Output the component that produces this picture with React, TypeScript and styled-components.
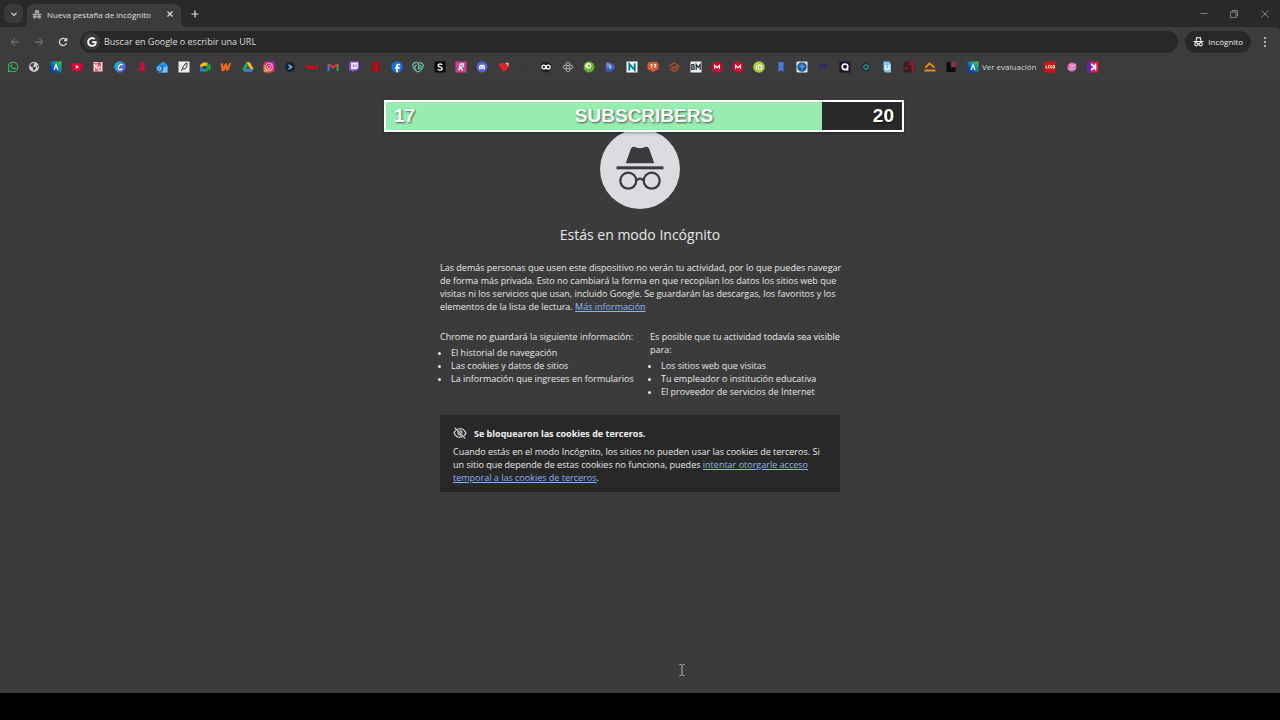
import React from "react";
import styled, { createGlobalStyle } from "styled-components";
import {
  FaWhatsapp,
  FaEarthAmericas,
  FaInstagram,
  FaFacebookF,
  FaDiscord,
  FaGoogle,
} from "react-icons/fa6";

const GlobalStyle = createGlobalStyle`
  *, *::before, *::after { box-sizing: border-box; }
  body {
    margin: 0;
    background: #000;
    color: #e8e8e8;
    font-family: "Open Sans", "Noto Sans", sans-serif;
    font-size: 9px;
    line-height: 13px;
  }
  button, input { font: inherit; color: inherit; }
  svg { display: block; }
`;

const Page = styled.div`
  position: relative;
  min-height: 100vh;
  display: flex;
  flex-direction: column;
`;

/* ---------- window chrome ---------- */

const TabStrip = styled.header`
  display: flex;
  align-items: flex-end;
  height: 27px;
  padding-left: 4px;
  background: #292929;
`;

const IconButton = styled.button<{ $width?: number; $height?: number; $bg?: string; $tone?: string }>`
  flex: none;
  display: flex;
  align-items: center;
  justify-content: center;
  width: ${(p) => p.$width ?? 24}px;
  height: ${(p) => p.$height ?? 24}px;
  padding: 0;
  border: 0;
  border-radius: 6px;
  background: ${(p) => p.$bg ?? "transparent"};
  color: ${(p) => p.$tone ?? "#dcdcdc"};
`;

const SearchTabs = styled.div`
  align-self: center;
  margin-right: 4px;
`;

const Tab = styled.div`
  position: relative;
  display: flex;
  align-items: center;
  width: 154px;
  height: 23px;
  padding: 0 4px 3px 5px;
  border-radius: 7px 7px 0 0;
  background: #3c3c3c;
  color: #e0e0e0;
  font-size: 8px;

  &::before,
  &::after {
    content: "";
    position: absolute;
    bottom: 0;
    width: 6px;
    height: 6px;
  }
  &::before {
    left: -6px;
    background: radial-gradient(circle at 0 0, transparent 6px, #3c3c3c 6px);
  }
  &::after {
    right: -6px;
    background: radial-gradient(circle at 100% 0, transparent 6px, #3c3c3c 6px);
  }
`;

const TabTitle = styled.span`
  flex: 1;
  padding-left: 5px;
  white-space: nowrap;
`;

const NewTab = styled.div`
  align-self: center;
  margin-left: 4px;
`;

const WindowControls = styled.div`
  display: flex;
  margin-left: auto;
  align-self: center;
`;

const Toolbar = styled.div`
  display: flex;
  align-items: center;
  height: 30px;
  padding: 0 4px 1px 3px;
  border-top-right-radius: 6px;
  background: #3c3c3c;
`;

const ToolbarBack = styled.div`
  background: #292929;
`;

const Omnibox = styled.label`
  flex: 1;
  display: flex;
  align-items: center;
  height: 22px;
  margin-left: 5px;
  padding-left: 3px;
  border-radius: 11px;
  background: #282828;
`;

const GoogleBadge = styled.span`
  flex: none;
  display: flex;
  align-items: center;
  justify-content: center;
  width: 17px;
  height: 17px;
  border-radius: 50%;
  background: #3b3b3b;
  color: #fff;
`;

const OmniboxInput = styled.input`
  flex: 1;
  min-width: 0;
  height: 20px;
  padding: 0 0 0 4px;
  border: 0;
  outline: 0;
  background: transparent;

  &::placeholder {
    color: #dedede;
    opacity: 1;
  }
`;

const IncognitoChip = styled.button`
  flex: none;
  display: flex;
  align-items: center;
  gap: 4px;
  height: 22px;
  margin: 0 3px 0 7px;
  padding: 0 8px;
  border: 0;
  border-radius: 11px;
  background: #282828;
  color: #ececec;
  font-size: 8px;
`;

const BookmarksBar = styled.nav`
  display: flex;
  align-items: center;
  height: 24px;
  padding: 0 7px 5px;
  background: #3c3c3c;
`;

const BookmarkList = styled.div<{ $width: number }>`
  flex: none;
  display: flex;
  align-items: center;
  justify-content: space-between;
  width: ${(p) => p.$width}px;
`;

const Bookmark = styled.a`
  display: flex;
  align-items: center;
  gap: 3px;
  color: #d5d5d5;
  font-size: 8px;
  line-height: 12px;
  text-decoration: none;
  white-space: nowrap;
`;

const BookmarkSlot = styled.span`
  display: flex;
  align-items: center;
  justify-content: center;
  width: 12px;
  height: 12px;
`;

const NamedBookmark = styled(Bookmark)`
  margin: 0 8px 0 9px;
`;

/* ---------- page content ---------- */

const Content = styled.main`
  flex: 1;
  display: flex;
  flex-direction: column;
  align-items: center;
  padding: 48px 16px 40px;
  background: #3b3b3b;
`;

const Title = styled.h1`
  margin: 14px 0 0;
  font-size: 14px;
  line-height: 24px;
  font-weight: 400;
`;

const Article = styled.div`
  width: 100%;
  max-width: 400px;
`;

const Paragraph = styled.p`
  margin: 0;
  white-space: nowrap;
`;

const Intro = styled(Paragraph)`
  margin-top: 14px;
`;

const Link = styled.a`
  color: #8ab4f8;
`;

const Strong = styled.strong`
  font-weight: 500;
  color: #f4f4f4;
`;

const Columns = styled.div`
  display: grid;
  grid-template-columns: minmax(0, 1fr) minmax(0, 1fr);
  column-gap: 20px;
  margin-top: 17px;
`;

const BulletList = styled.ul`
  margin: 3px 0 0;
  padding-left: 11px;
  white-space: nowrap;
`;

const CookieCard = styled.section`
  margin-top: 17px;
  padding: 11px 13px 8px;
  background: #282828;
`;

const CookieTitle = styled.h2`
  display: flex;
  align-items: center;
  gap: 7px;
  margin: 0 0 5px;
  font-size: 9px;
  line-height: 13px;
  font-weight: 700;
  color: #f4f4f4;
`;

const Letterbox = styled.footer`
  height: 27px;
  background: #000;
`;

/* ---------- overlays ---------- */

const Goal = styled.div`
  position: absolute;
  top: 100px;
  left: 30%;
  width: 520px;
  height: 32px;
  border: 2px solid #fff;
  background: #292929;
  box-shadow: 0 1px 3px rgba(0, 0, 0, 0.35);
`;

const GoalFill = styled.div`
  width: 84.5%;
  height: 100%;
  background: #96edaf;
`;

const GoalLabels = styled.div`
  position: absolute;
  inset: 0;
  display: grid;
  grid-template-columns: 1fr auto 1fr;
  align-items: center;
  padding: 0 8px;
  font-family: "Liberation Sans", Arial, sans-serif;
  font-size: 19px;
  line-height: 28px;
  font-weight: 700;
  color: #fff;
  text-shadow: 1px 1px 2px rgba(0, 0, 0, 0.6);

  & > :last-child {
    text-align: right;
  }
`;

const Pointer = styled.div`
  position: absolute;
  left: 678px;
  top: 664px;
`;

/* ---------- drawings ---------- */

const HAT = "M25.7 34.3 31 19.6Q31.9 17.6 34 17.8Q37 19.2 40 19.2Q43 19.2 46 17.8Q48.1 17.6 49 19.6L54.3 34.3Z";

const IncognitoLogo = () => (
  <svg width="80" height="80" viewBox="0 0 80 80" aria-hidden="true">
    <circle cx="40" cy="40" r="40" fill="#dadce0" />
    <g fill="#3b3b3d">
      <path d={HAT} />
      <rect x="16.5" y="37.3" width="47" height="3" />
    </g>
    <g fill="none" stroke="#3b3b3d" strokeWidth="2.3">
      <circle cx="28.3" cy="51.7" r="8" />
      <circle cx="51.7" cy="51.7" r="8" />
      <path d="M36.2 51.2Q40 48.4 43.8 51.2" />
    </g>
  </svg>
);

const SmallIncognito = () => (
  <svg width="10" height="10" viewBox="0 0 20 20" fill="#a6a8ab" aria-hidden="true">
    <path d="M5 8.500 6.800 1.500Q10 3 13.200 1.500L15 8.500ZM1 9.500H19V12H1Z" />
    <circle cx="5.500" cy="15.500" r="3.700" />
    <circle cx="14.500" cy="15.500" r="3.700" />
    <path d="M8 13.500H12V15.500H8Z" />
  </svg>
);

const OutlineIncognito = () => (
  <svg width="11" height="11" viewBox="0 0 22 22" fill="none" stroke="#ececec" strokeWidth="2.200" aria-hidden="true">
    <path d="M6 9.500 7.600 3Q11 4.300 14.400 3L16 9.500M1 11H21" />
    <circle cx="6.500" cy="16.500" r="3.200" />
    <circle cx="15.500" cy="16.500" r="3.200" />
    <path d="M9.500 16H12.500" />
  </svg>
);

const Line = ({ d, width = 1.2 }: { d: string; width?: number }) => (
  <svg width="10" height="10" viewBox="0 0 10 10" fill="none" stroke="currentColor" strokeWidth={width} aria-hidden="true">
    <path d={d} />
  </svg>
);

const EyeOff = () => (
  <svg width="14" height="14" viewBox="0 0 14 14" fill="none" stroke="#e8e8e8" strokeWidth="1.100" aria-hidden="true">
    <path d="M4.600 3.300Q5.700 2.800 7 2.800Q11 2.800 13 7Q12.300 8.500 11 9.600M9.300 10.700Q8.200 11.200 7 11.200Q3 11.200 1 7Q1.700 5.500 3 4.400M1.800 1.800 12.200 12.400" />
    <path d="M6.500 4.800Q8.900 4.800 9.200 7.300M7.800 9.100Q5 9.300 4.800 6.200" />
  </svg>
);

const Fav = ({ children }: { children: React.ReactNode }) => (
  <svg width="12" height="12" viewBox="0 0 12 12" aria-hidden="true">
    {children}
  </svg>
);

const AlphaTile = () => (
  <Fav>
    <defs>
      <linearGradient id="alpha-tile" x1="0" y1="1" x2="1" y2="0">
        <stop offset="0.2" stopColor="#0b3fb0" />
        <stop offset="0.6" stopColor="#0a8fa8" />
        <stop offset="1" stopColor="#4fd02c" />
      </linearGradient>
    </defs>
    <rect x="0.5" y="0.5" width="11" height="11" fill="url(#alpha-tile)" />
    <path d="M4 9 6 3.800 8 9" fill="none" stroke="#fff" strokeWidth="1.3" />
  </Fav>
);

const Mega = () => (
  <Fav>
    <circle cx="6" cy="6" r="5.6" fill="#d9042b" />
    <path d="M3.600 8V4.300L6 6.600 8.400 4.300V8" fill="none" stroke="#fff" strokeWidth="1.2" />
  </Fav>
);

const bookmarks: [string, React.ReactNode][] = [
  ["WhatsApp", <FaWhatsapp size={12} color="#36c96b" />],
  ["Web", <FaEarthAmericas size={10} color="#d0d0d0" />],
  ["Alpha", <AlphaTile />],
  ["YouTube", <Fav><rect x=".5" y="2" width="11" height="8" rx="2.5" fill="#e0002c" /><path d="M4.800 4V8L8.200 6Z" fill="#fff" /></Fav>],
  ["Nd", <Fav><path d="M1 1H11V11H1Z" fill="#c9656c" /><path d="M2.500 10V3L5 8V3M9.500 1V9.500H6.800V6H9.500M2 1.500H6" stroke="#ffd9da" strokeWidth="1.2" fill="none" /></Fav>],
  ["Canva", <Fav><defs><linearGradient id="canva" x1="0" y1="0" x2="1" y2="1"><stop offset="0.1" stopColor="#12c3d0" /><stop offset="1" stopColor="#7a2fe8" /></linearGradient></defs><circle cx="6" cy="6" r="5.8" fill="url(#canva)" /><path d="M8.500 4Q7 2.500 5.200 4.500Q3.500 7 4.800 8.500Q6.500 9.500 8.400 7.500" fill="none" stroke="#fff" strokeWidth="1.2" /></Fav>],
  ["Rojo", <Fav><path d="M2 10 4.500 8 6 1.500 9.500 1V10.800L7 9.500Z" fill="#d00c3d" /></Fav>],
  ["Outlook", <Fav><path d="M1 5 7.500 .5 11.500 4V11.500H2Z" fill="#2f8ee6" /><path d="M5 8 11.500 5V11.500H5Z" fill="#76c4fa" /><rect y="4.500" width="7" height="6" rx="1" fill="#1668c2" /><circle cx="3.5" cy="7.5" r="1.6" fill="none" stroke="#fff" /></Fav>],
  ["Pluma", <Fav><rect x=".5" y=".5" width="11" height="11" fill="#f1eeee" /><path d="M3.500 10 5 6Q7 2 9 2Q9.500 5 7.500 7.500L5 8" fill="none" stroke="#333" /></Fav>],
  ["Meet", <Fav><path d="M1 4 4 1.500H8.500V5H4V7H1Z" fill="#f3bd17" /><path d="M1 5.500H4V8H6V10.500H1Z" fill="#2c78df" /><path d="M8.500 4.500 11.500 2V10L8.500 8V10.500H5V8H7.500V4Z" fill="#1aa64b" /></Fav>],
  ["W", <Fav><path d="M.5 2.500 3 2.300 3.400 6.300 5 2.500 7 2.200 7.400 6 9 2.300 11.500 1.500 8.500 9.500 6.300 9.800 5.800 7 4.300 10 1.800 10.200Z" fill="#f0691d" /></Fav>],
  ["Drive", <Fav><path d="M4.200 1.200H7.800L11.800 8H8.300Z" fill="#f9bd18" /><path d="M4.200 1.200 6 4.200 2.200 10.800.3 8Z" fill="#28a65a" /><path d="M4 7.700H11.800L10 10.800H2.200Z" fill="#3c7fe8" /></Fav>],
  ["Instagram", <Fav><defs><linearGradient id="insta" x1="0" y1="1" x2="1" y2="0"><stop stopColor="#fdb11f" /><stop offset="0.5" stopColor="#f0205f" /><stop offset="1" stopColor="#a42fe0" /></linearGradient></defs><rect x=".5" y=".5" width="11" height="11" rx="2.5" fill="url(#insta)" /><FaInstagram x={2} y={2} size={8} color="#fff" /></Fav>],
  ["Código", <Fav><circle cx="6" cy="6" r="5" fill="#14253a" /><path d="M4.500 3.800 7.500 6 4.500 8.300" fill="none" stroke="#8ec9f2" strokeWidth="1.4" /></Fav>],
  ["Mu", <Fav><path d="M.8 8V4.700H3V7.500M3 5H5V8M7 4.500V7.500H11.200V5H9" fill="none" stroke="#c4121c" strokeWidth="1.8" /></Fav>],
  ["Gmail", <Fav><path d="M1.500 10V3" stroke="#3d82f0" strokeWidth="2" /><path d="M10.500 10V3" stroke="#2ea350" strokeWidth="2" /><path d="M1.500 3 6 6.500 10.500 3" fill="none" stroke="#e53b31" strokeWidth="2" /></Fav>],
  ["Twitch", <Fav><path d="M2 .5H11V7.500L8 10H6L4 11.800V10H1V2.500Z" fill="#8a45ee" /><path d="M3 1.600H10V7L8.500 8.300H3Z" fill="#efe6ff" /><path d="M5.500 3.500V6M8 3.500V6" stroke="#8a45ee" /></Fav>],
  ["Netflix", <Fav><path d="M2.500 .8H9.500V11.200H2.500Z" fill="#a50d18" /><path d="M4.500 .8H5.500L8 11.200H6.800Z" fill="#d0101d" /></Fav>],
  ["Facebook", <Fav><circle cx="6" cy="6" r="5.7" fill="#1673ea" /><FaFacebookF x={2} y={2.5} size={9} color="#fff" /></Fav>],
  ["Espiral", <Fav><path d="M6 11Q.7 8.200.8 4.200Q1.500 1 5 1.300Q7.300 2 6.300 5.500M6 11Q11.500 8 11.200 4Q9.500.5 6.500 2.500M9.300 4.500Q6.500 4.500 6.200 7.800Q9 8 9.300 5.300M5 4Q2 4.500 3.500 7.500" fill="none" stroke="#66c2aa" strokeWidth="1.2" /></Fav>],
  ["S", <Fav><rect x=".5" y=".5" width="11" height="11" fill="#080808" /><path d="M8.200 3.800Q7.500 2.800 6 2.800Q4 2.900 4 4.400Q4.100 5.600 6 5.900Q8.200 6.300 8.200 7.600Q8 9.200 6 9.200Q4.300 9.200 3.700 8" fill="none" stroke="#fff" strokeWidth="1.3" /></Fav>],
  ["R", <Fav><rect x=".5" y=".5" width="11" height="11" fill="#d13e90" /><path d="M4 9.500 5.300 3H8.500Q9 6.200 5 6.300L7.800 9.500" fill="none" stroke="#fff" strokeWidth="1.3" /></Fav>],
  ["Discord", <Fav><circle cx="6" cy="6" r="5.5" fill="#5560e4" /><FaDiscord x={2.5} y={2.5} size={7} color="#fff" /></Fav>],
  ["Diamante", <Fav><path d="M.5 4.500 3 1.500 6 2.500 8 1.500 11.500 5.500 6 11Z" fill="#d8232f" /><path d="M7.500 1.500 10.500 2 10.300 5.500Z" fill="#f3d6d8" /></Fav>],
  ["Oscuro", <Fav><path d="M4 7Q5.500 4 8 5" fill="none" stroke="#303030" /></Fav>],
  ["Infinito", <Fav><circle cx="6" cy="6" r="5.5" fill="#222" /><circle cx="3.8" cy="6" r="1.9" fill="none" stroke="#fff" strokeWidth="1.3" /><circle cx="8.2" cy="6" r="1.9" fill="none" stroke="#fff" strokeWidth="1.3" /></Fav>],
  ["Nodo", <Fav><g fill="none" stroke="#b5b5b5"><circle cx="6" cy="6" r="1.6" /><path d="M4.300 4.300V2Q6 0 7.700 2V4.300H10Q12 6 10 7.700H7.700V10Q6 12 4.300 10V7.700H2Q0 6 2 4.300Z" /></g></Fav>],
  ["Verde", <Fav><circle cx="6" cy="6" r="5.4" fill="#67b62b" /><circle cx="5.300" cy="4.800" r="3" fill="#e4f6cc" /><circle cx="6" cy="4.800" r="1.100" fill="#53a321" /></Fav>],
  ["Play", <Fav><path d="M3 1Q9 .5 11.500 6Q9 11 4 11.500Q1 9 1 5Z" fill="#4255b7" /><path d="M2.500 1 8 4 3 7Z" fill="#b07bb5" /><path d="M5 4 9 6 5 8.500Z" fill="#48d2f2" /></Fav>],
  ["N", <Fav><rect x=".5" y=".5" width="11" height="11" fill="#f4faf9" /><path d="M3.300 9.800V3L8.700 9V2.200" fill="none" stroke="#087f92" strokeWidth="1.9" /></Fav>],
  ["Citas", <Fav><path d="M2 1H10L11.500 3V8L9 9.500H8L6 11.500 4 9.500H3L.5 8V3Z" fill="#d85b38" /><path d="M3.500 3.500H5V5L4 6.800M7 3.500H8.500V5L7.500 6.800" fill="none" stroke="#fbe2d9" strokeWidth="1.2" /></Fav>],
  ["Cubo", <Fav><path d="M1 5 6 2 11 5 7 7 3.500 5.500M11 7 6 10.500 2 7.500M4 8 8.500 5.500" fill="none" stroke="#b54f2e" strokeWidth="1.2" /></Fav>],
  ["BM", <Fav><rect x=".5" y=".5" width="11" height="11" fill="#e9f0f0" /><path d="M1.800 3.500H3.500Q5 4.500 3.500 6Q5.200 7 3.500 8.500H1.800ZM6.200 9V3.500L8.200 6.500 10.200 3.500V9M2 6H3.500" fill="none" stroke="#1d2c33" strokeWidth="1.2" /></Fav>],
  ["Mega", <Mega />],
  ["Mega 2", <Mega />],
  ["iD", <Fav><circle cx="6" cy="6" r="5.8" fill="#a5ce3a" /><path d="M3.500 4V8.500M5.500 4H7Q9 4.500 9 6.300Q8.800 8.300 7 8.500H5.500Z" fill="none" stroke="#fff" strokeWidth="1.1" /></Fav>],
  ["Marcador", <Fav><path d="M3.500 1H8.500V11L6 9 3.500 11Z" fill="#4b7bdd" /></Fav>],
  ["Escudo", <Fav><rect x=".5" y=".5" width="11" height="11" rx="1" fill="#e4edf4" /><circle cx="6" cy="6" r="4.8" fill="#1c5da4" /><path d="M6 2.500V9.500M3.500 5Q6 6.500 8.500 5" stroke="#a7c6e5" strokeWidth=".7" fill="none" /></Fav>],
  ["Párrafo", <Fav><path d="M2 3.500H10M5.500 3V7.500M8 3V9M2.500 4.500Q3 7 5.500 6.500" fill="none" stroke="#2f2a68" strokeWidth="1.4" /></Fav>],
  ["Q", <Fav><rect x=".5" y=".5" width="11" height="11" fill="#241230" /><circle cx="6" cy="5.8" r="2.8" fill="none" stroke="#fff" strokeWidth="1.7" /><path d="M6.500 8.800H9.500" stroke="#fff" strokeWidth="1.4" /></Fav>],
  ["Hexágono", <Fav><path d="M3.500 1.500H8.500L11 6 8.500 10.500H3.500L1 6Z" fill="#2b3031" /><circle cx="6" cy="6" r="2.200" fill="none" stroke="#2e8f8a" strokeWidth="1.3" /></Fav>],
  ["Notas", <Fav><path d="M2.500.5H8L10 3V11.500H4L2.500 9Z" fill="#7cc9f7" /><path d="M4.500 4V7.500Q6.500 9.500 8 7.500V4" fill="none" stroke="#eefaff" strokeWidth="1.5" /></Fav>],
  ["Granate", <Fav><rect x=".5" y=".5" width="11" height="11" fill="#3a1e24" /><path d="M6 1H11V11H8.500V4H6ZM2 6H4.500V8H2Z" fill="#951927" /></Fav>],
  ["Naranja", <Fav><path d="M1.500 6.500 5.500 2.500 10.500 6.500" fill="none" stroke="#e98a1c" strokeWidth="1.8" /><path d="M.5 8.500H11.500V10.500H.5Z" fill="#e98a1c" /></Fav>],
  ["Bloques", <Fav><path d="M1.500 1H5.500V6.500H10.500V11H1.500Z" fill="#0b0b0b" /><path d="M6.500 1H10.500V5.500H6.500Z" fill="#a8283e" /></Fav>],
];

const lastBookmarks: [string, React.ReactNode][] = [
  ["Lego", <Fav><rect x=".5" y=".5" width="11" height="11" fill="#d41414" /><path d="M2 4.500V7H3.500M5.800 4.500H4.500V7H5.800M8 4.500H6.800V7H8V6M9 4.500H10.500V7H9Z" fill="none" stroke="#fbeeca" strokeWidth=".9" /></Fav>],
  ["Planeta", <Fav><circle cx="6" cy="6" r="4.5" fill="#d76bb4" /><path d="M1.500 8.500 10.500 3M3 4 8 4.500M4 9 9.500 7" stroke="#f3d3ea" strokeWidth=".8" fill="none" /></Fav>],
  ["K", <Fav><rect x=".5" y=".5" width="11" height="11" fill="#e5164d" /><path d="M.5.5H4V11.500H.5Z" fill="#5b1fd0" /><path d="M8.500 2.500V9.500M8 6 4 3M8 6 4 9" stroke="#fff" strokeWidth="1.6" fill="none" /></Fav>],
];

const BookmarkIcons = ({ items, width }: { items: [string, React.ReactNode][]; width: number }) => (
  <BookmarkList $width={width}>
    {items.map(([name, icon]) => (
      <Bookmark key={name} href="#" aria-label={name}>
        <BookmarkSlot>{icon}</BookmarkSlot>
      </Bookmark>
    ))}
  </BookmarkList>
);

const App = () => (
  <Page>
    <GlobalStyle />
    <TabStrip>
      <SearchTabs>
        <IconButton $width={19} $height={19} $bg="#3a3a3a" aria-label="Buscar pestañas">
          <Line d="M2.500 3.800 5 6.300 7.500 3.800" />
        </IconButton>
      </SearchTabs>
      <Tab>
        <SmallIncognito />
        <TabTitle>Nueva pestaña de incógnito</TabTitle>
        <IconButton $width={14} $height={14} aria-label="Cerrar pestaña">
          <Line d="M2.500 2.500 7.500 7.500M7.500 2.500 2.500 7.500" />
        </IconButton>
      </Tab>
      <NewTab>
        <IconButton $width={20} $height={20} aria-label="Nueva pestaña">
          <Line d="M5 1.500V8.500M1.500 5H8.500" />
        </IconButton>
      </NewTab>
      <WindowControls>
        <IconButton $width={31} $tone="#7c7c7c" aria-label="Minimizar">
          <Line d="M1.500 4.500H8.500" width={1} />
        </IconButton>
        <IconButton $width={30} $tone="#8b8b8b" aria-label="Restaurar">
          <Line d="M1.500 3H7V8.500H1.500ZM3.200 3V1.500H8.500V7H7" width={0.9} />
        </IconButton>
        <IconButton $width={31} $tone="#8b8b8b" aria-label="Cerrar">
          <Line d="M1.500 1.500 8.500 8.500M8.500 1.500 1.500 8.500" width={0.9} />
        </IconButton>
      </WindowControls>
    </TabStrip>

    <ToolbarBack>
      <Toolbar>
        <IconButton $tone="#838383" aria-label="Atrás">
          <Line d="M9 5H1.500M5 1.300 1.300 5 5 8.700" width={1} />
        </IconButton>
        <IconButton $tone="#838383" aria-label="Adelante">
          <Line d="M1 5H8.500M5 1.300 8.700 5 5 8.700" width={1} />
        </IconButton>
        <IconButton aria-label="Volver a cargar">
          <Line d="M8.500 6A3.600 3.600 0 1 1 7.700 2.500L8.700 3.600M8.700 1V3.700H6" />
        </IconButton>
        <Omnibox>
          <GoogleBadge>
            <FaGoogle size={10} />
          </GoogleBadge>
          <OmniboxInput
            type="text"
            aria-label="Barra de direcciones"
            placeholder="Buscar en Google o escribir una URL"
          />
        </Omnibox>
        <IncognitoChip>
          <OutlineIncognito />
          Incógnito
        </IncognitoChip>
        <IconButton $width={22} aria-label="Menú">
          <svg width="10" height="10" viewBox="0 0 10 10" fill="currentColor" aria-hidden="true">
            <circle cx="5" cy="1" r="1" />
            <circle cx="5" cy="5" r="1" />
            <circle cx="5" cy="9" r="1" />
          </svg>
        </IconButton>
      </Toolbar>
    </ToolbarBack>

    <BookmarksBar aria-label="Marcadores">
      <BookmarkIcons items={bookmarks} width={951} />
      <NamedBookmark href="#">
        <AlphaTile />
        Ver evaluación
      </NamedBookmark>
      <BookmarkIcons items={lastBookmarks} width={55} />
    </BookmarksBar>

    <Content>
      <IncognitoLogo />
      <Title>Estás en modo Incógnito</Title>
      <Article>
        <Intro>
          Las demás personas que usen este dispositivo no verán tu actividad, por lo que puedes navegar
          <br />
          de forma más privada. Esto no cambiará la forma en que recopilan los datos los sitios web que
          <br />
          visitas ni los servicios que usan, incluido Google. Se guardarán las descargas, los favoritos y los
          <br />
          elementos de la lista de lectura. <Link href="#">Más información</Link>
        </Intro>
        <Columns>
          <div>
            <Paragraph>
              Chrome <Strong>no guardará</Strong> la siguiente información:
            </Paragraph>
            <BulletList>
              <li>El historial de navegación</li>
              <li>Las cookies y datos de sitios</li>
              <li>La información que ingreses en formularios</li>
            </BulletList>
          </div>
          <div>
            <Paragraph>
              Es posible que tu actividad <Strong>todavía sea visible</Strong>
              <br />
              para:
            </Paragraph>
            <BulletList>
              <li>Los sitios web que visitas</li>
              <li>Tu empleador o institución educativa</li>
              <li>El proveedor de servicios de Internet</li>
            </BulletList>
          </div>
        </Columns>
        <CookieCard>
          <CookieTitle>
            <EyeOff />
            Se bloquearon las cookies de terceros.
          </CookieTitle>
          <Paragraph>
            Cuando estás en el modo Incógnito, los sitios no pueden usar las cookies de terceros. Si
            <br />
            un sitio que depende de estas cookies no funciona, puedes{" "}
            <Link href="#">
              intentar otorgarle acceso
              <br />
              temporal a las cookies de terceros
            </Link>
            .
          </Paragraph>
        </CookieCard>
      </Article>
    </Content>
    <Letterbox />

    <Goal>
      <GoalFill />
      <GoalLabels>
        <span>17</span>
        <span>SUBSCRIBERS</span>
        <span>20</span>
      </GoalLabels>
    </Goal>
    <Pointer>
      <svg width="8" height="12" viewBox="0 0 8 12" fill="none" stroke="#b8b8b8" aria-hidden="true">
        <path d="M1.500 .5H3L4 1.500 5 .5H6.500M4 1.500V10.500M1.500 11.500H3L4 10.500 5 11.500H6.500" />
      </svg>
    </Pointer>
  </Page>
);

export default App;
